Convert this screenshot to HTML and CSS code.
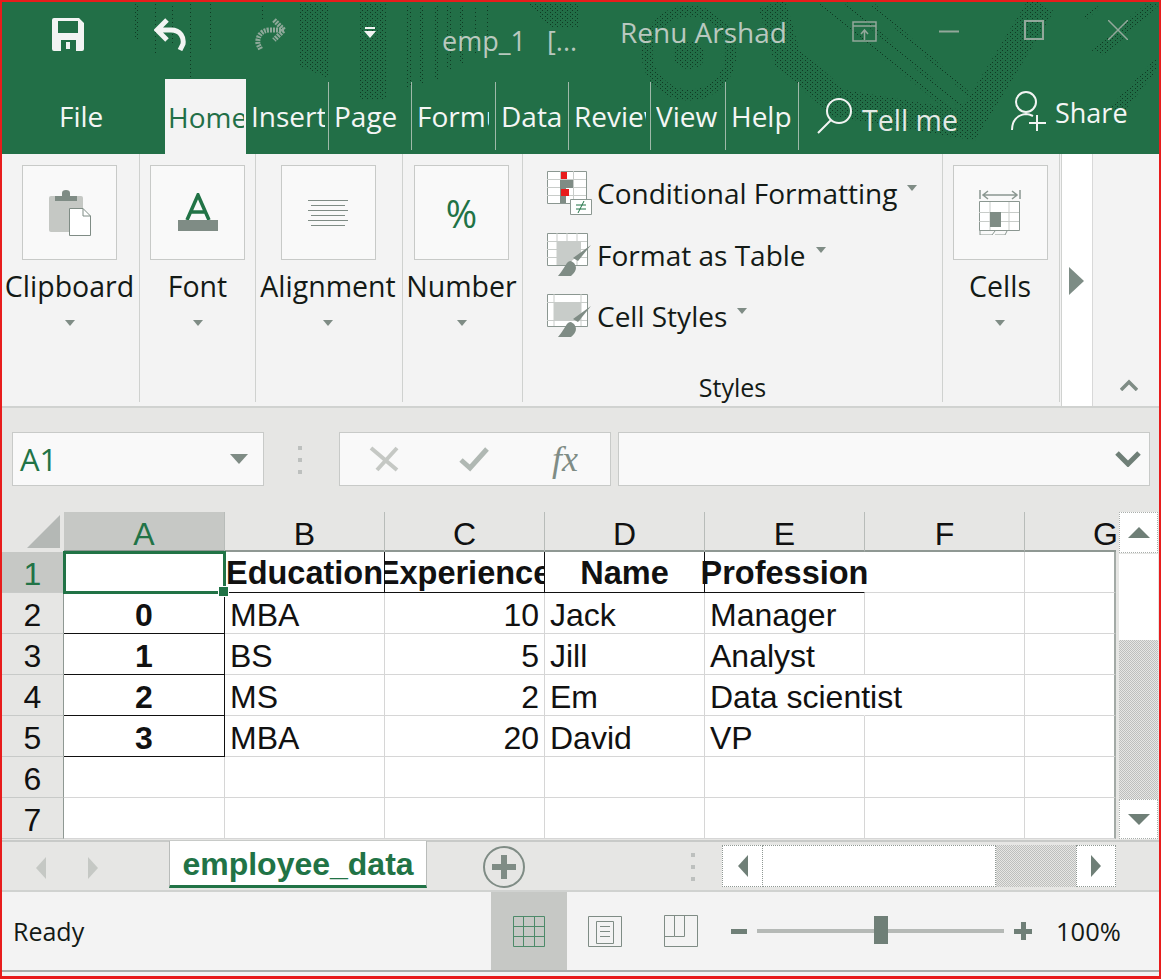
FILE: index.html
```html
<!DOCTYPE html>
<html lang="en">
<head>
<meta charset="utf-8">
<title>emp_1 - Excel</title>
<link rel="stylesheet" href="styles.css">
</head>
<body>
<div class="frame">
  <header class="head">
    <svg class="decor" width="1157" height="150" viewBox="2 2 1157 150" aria-hidden="true">
      <defs>
        <pattern id="dots" width="5" height="4" patternUnits="userSpaceOnUse">
          <rect width="1" height="1" fill="#0f3a23"/>
          <rect x="2" y="2" width="1" height="1" fill="#0f3a23"/>
        </pattern>
      </defs>
      <g fill="none" stroke="url(#dots)" stroke-width="4">
        <path d="M136 4V40M155 4V54M173 4V45M190 4V77M210 4V50M263 4V22M409 5V88M422 5V83M436 5V79M449 5V70M462 5V63M475 5V55M488 5V50"/>
        <path d="M820 4L950 110M846 4L965 110M872 4L975 100M1098 7L1085 18"/>
      </g>
      <g fill="url(#dots)">
        <path d="M298 4H328V78L300 66Z"/>
        <path d="M358 4H386V100H358Z"/>
        <path d="M529 4H580V28L550 28Z"/>
        <path d="M1090 50L1146 4L1160 4L1105 55ZM1109 108L1157 57L1157 70L1125 110Z"/>
      </g>
      <circle cx="689" cy="53" r="42" fill="none" stroke="url(#dots)" stroke-width="11"/>
      <ellipse cx="689" cy="55" rx="16" ry="14" fill="url(#dots)"/>
      <path d="M772 4L787 57L839 103L968 125L1042 4" fill="none" stroke="url(#dots)" stroke-width="28"/>
    </svg>
    <div class="titlebar">
      <svg class="ic ic-save" width="32" height="33" viewBox="0 0 32 33"><path fill="#f2f4f3" fill-rule="evenodd" d="M2 0H27L32 5V31a2 2 0 0 1-2 2H2a2 2 0 0 1-2-2V2a2 2 0 0 1 2-2ZM6 3V15H26V3ZM9 22V33H24V22ZM14 24H18V31H14Z"/></svg>
      <svg class="ic ic-undo" width="32" height="33" viewBox="0 0 32 33"><path fill="none" stroke="#f2f4f3" stroke-width="5" d="M13 2L3 12L13 22M3 12H17C27 12 30 20 29 26L26 32"/></svg>
      <svg class="ic ic-redo" width="32" height="33" viewBox="0 0 32 33"><path fill="none" stroke="#8ea99a" stroke-width="5" stroke-dasharray="2 1" d="M19 2L29 12L19 22M29 12H15C5 12 2 20 3 26L6 32"/></svg>
      <svg class="ic ic-qat" width="12" height="12" viewBox="0 0 12 12"><path fill="#f2f4f3" d="M1 0H11V2H1ZM0 4H12L6 11Z"/></svg>
      <span class="doc">emp_1&nbsp;&nbsp;&nbsp;[...</span>
      <span class="user">Renu Arshad</span>
      <svg class="ic ic-restore" width="25" height="21" viewBox="0 0 25 21"><path fill="none" stroke="#93a89b" stroke-width="1.5" d="M1 1H24V20H1ZM1 5H24M9 13L12.500 9L16 13M12.500 9V19"/></svg>
      <svg class="ic ic-min" width="20" height="3" viewBox="0 0 20 3"><path stroke="#93a89b" stroke-width="2" d="M0 1.500H20"/></svg>
      <svg class="ic ic-max" width="20" height="20" viewBox="0 0 20 20"><path fill="none" stroke="#93a89b" stroke-width="2" d="M1 1H19V19H1Z"/></svg>
      <svg class="ic ic-close" width="20" height="20" viewBox="0 0 20 20"><path fill="none" stroke="#93a89b" stroke-width="1.500" d="M0 0L20 20M20 0L0 20"/></svg>
    </div>
    <nav class="tabs">
      <div class="tab tab-file"><span>File</span></div>
      <div class="tab tab-home"><span>Home</span></div>
      <div class="tab tab-sep t83"><span>Insert</span></div>
      <div class="tab tab-sep t83"><span>Page</span></div>
      <div class="tab tab-sep t84"><span>Formulas</span></div>
      <div class="tab tab-sep t73"><span>Data</span></div>
      <div class="tab tab-sep t82"><span>Review</span></div>
      <div class="tab tab-sep t75"><span>View</span></div>
      <div class="tab tab-sep t73"><span>Help</span></div>
      <svg class="ic ic-search" width="35" height="36" viewBox="0 0 35 36"><path fill="none" stroke="#f2f4f3" stroke-width="2" d="M34 13A12 12 0 1 1 10 13A12 12 0 1 1 34 13ZM14 22L1 35"/></svg>
      <span class="tell">Tell me</span>
      <svg class="ic ic-person" width="36" height="40" viewBox="0 0 36 40"><path fill="none" stroke="#f2f4f3" stroke-width="2" d="M25 11A10 10 0 1 1 5 11A10 10 0 1 1 25 11ZM1 39C1 30 6 24 15 23C18 23 20 24 22 25M26 24V40M18 32H35"/></svg>
      <span class="share">Share</span>
    </nav>
  </header>

  <section class="ribbon">
    <div class="group g-clip">
      <div class="bigbtn"><svg width="42" height="46" viewBox="0 0 42 46"><path fill="#c5c8c4" d="M2 6H32a2 2 0 0 1 2 2V42H2a2 2 0 0 1-2-2V8a2 2 0 0 1 2-2Z"/><path fill="#7f8c85" d="M6 6H28V11H6ZM13 6V3a4 3 0 0 1 8 0V6Z"/><path fill="#fff" stroke="#7f8c85" d="M20.500 18.500H34L41.500 26V45.500H20.500Z"/><path fill="none" stroke="#7f8c85" d="M34 18.500V26H41.500"/></svg></div>
      <div class="glabel">Clipboard</div><i class="caret"></i>
    </div>
    <div class="group g-font">
      <div class="bigbtn"><svg width="40" height="39" viewBox="0 0 40 39"><path fill="none" stroke="#217346" stroke-width="3.500" d="M9 27L20 2L31 27M13 19H27"/><rect y="27" width="40" height="11" fill="#7f8c85"/></svg></div>
      <div class="glabel">Font</div><i class="caret"></i>
    </div>
    <div class="group g-align">
      <div class="bigbtn"><svg width="40" height="28" viewBox="0 0 40 28"><path stroke="#7f8c85" d="M0 1.500H40M3 6.500H37M0 11.500H40M3 16.500H37M0 21.500H40M3 26.500H37"/></svg></div>
      <div class="glabel">Alignment</div><i class="caret"></i>
    </div>
    <div class="group g-num">
      <div class="bigbtn pct">%</div>
      <div class="glabel">Number</div><i class="caret"></i>
    </div>
    <div class="group g-styles">
      <div class="stylerow">
        <svg width="45" height="44" viewBox="0 0 45 44"><path fill="#fff" stroke="#8b9791" d="M.5 .500H39.500V32.500H.5Z"/><path stroke="#c8ccc9" d="M13.500 0V32M26.500 0V32M0 8.500H39M0 16.500H39M0 24.500H39"/><path fill="#7f8c85" d="M13 9H26V17H19V32H13Z"/><path fill="#e81c1c" d="M14 1H20V8H14ZM14 18H22V25H14Z"/><path fill="#fff" stroke="#8b9791" d="M23.500 28.500H44.500V43.500H23.500Z"/><path stroke="#217346" fill="none" d="M29 34H39M29 38H39M37 30L31 42"/></svg>
        <span class="stext">Conditional Formatting</span><i class="caret c-cf"></i>
      </div>
      <div class="stylerow">
        <svg width="45" height="44" viewBox="0 0 45 44"><path fill="#fff" stroke="#8b9791" d="M.5 .500H40.500V32.500H.5Z"/><path stroke="#c8ccc9" d="M10 0V32M20 0V32M30 0V32M0 8.500H40M0 16.500H40M0 24.500H40"/><path fill="#c8ccc9" d="M10 9H34V20L20 32H10Z"/><path fill="#7f8c85" d="M44 12L31 28L26 25ZM24 28C19 28 19 34 11 43H24C30 38 30 34 27 30Z"/></svg>
        <span class="stext">Format as Table</span><i class="caret c-ft"></i>
      </div>
      <div class="stylerow">
        <svg width="45" height="44" viewBox="0 0 45 44"><path fill="#fff" stroke="#8b9791" d="M.5 .500H40.500V32.500H.5Z"/><path stroke="#c8ccc9" d="M7 0V32M34 0V32M0 8.500H40M0 26.500H40"/><rect x="7" y="9" width="27" height="18" fill="#c8ccc9"/><path fill="#7f8c85" d="M44 12L31 28L26 25ZM24 28C19 28 19 34 11 43H24C30 38 30 34 27 30Z"/></svg>
        <span class="stext">Cell Styles</span><i class="caret c-cs"></i>
      </div>
      <div class="styles-label">Styles</div>
    </div>
    <div class="group g-cells">
      <div class="bigbtn"><svg width="42" height="45" viewBox="0 0 42 45"><path fill="none" stroke="#8b9791" stroke-width="1.500" d="M1 0V9M41 0V9M5 5H37M9 1L4 5L9 9M33 1L38 5L33 9"/><path fill="#fff" stroke="#8b9791" d="M.5 11.500H40.500V40.500H.5Z"/><path stroke="#c8ccc9" d="M11 12V40M30 12V40M0 22.500H40M0 31.500H40"/><rect x="11" y="22" width="11" height="15" fill="#7f8c85"/><path fill="none" stroke="#8b9791" d="M1 40V45H13L16 41M16 45H26L28 41"/></svg></div>
      <div class="glabel">Cells</div><i class="caret"></i>
    </div>
    <div class="strip"><i class="arrow-r"></i></div>
    <div class="collapse"><svg width="18" height="12" viewBox="0 0 18 12"><path fill="none" stroke="#7f8c85" stroke-width="3.500" d="M1 11L9 3L17 11"/></svg></div>
  </section>

  <section class="formula">
    <div class="namebox"><span>A1</span><i class="nb-caret"></i></div>
    <div class="grip"><b></b><b></b><b></b></div>
    <div class="fbtns">
      <svg width="30" height="26" viewBox="0 0 30 26"><path fill="none" stroke="#c5c8c4" stroke-width="4" d="M2 2L28 24M28 2L8 24"/></svg>
      <svg width="30" height="26" viewBox="0 0 30 26"><path fill="none" stroke="#b0b8b3" stroke-width="5" d="M2 14L11 22L28 3"/></svg>
      <span class="fx">fx</span>
    </div>
    <div class="finput"><svg width="26" height="16" viewBox="0 0 26 16"><path fill="none" stroke="#6f7f77" stroke-width="5" d="M2 2L13 13L24 2"/></svg></div>
  </section>

  <section class="sheetarea">
    <div class="grid">
      <div class="corner"><svg width="34" height="34" viewBox="0 0 34 34"><path fill="#b4b8b5" d="M33 0V33H0Z"/></svg></div>
      <div class="ch ch-on">A</div><div class="ch">B</div><div class="ch">C</div><div class="ch">D</div><div class="ch">E</div><div class="ch">F</div><div class="ch ch-g">G</div>

      <div class="rh rh-on">1</div>
      <div class="c sel"></div>
      <div class="c hd">Education</div><div class="c hd">Experience</div><div class="c hd">Name</div><div class="c hd hd-last">Profession</div><div class="c"></div><div class="c end"></div>

      <div class="rh">2</div>
      <div class="c ix">0</div><div class="c tx">MBA</div><div class="c num">10</div><div class="c tx">Jack</div><div class="c tx">Manager</div><div class="c"></div><div class="c end"></div>
      <div class="rh">3</div>
      <div class="c ix">1</div><div class="c tx">BS</div><div class="c num">5</div><div class="c tx">Jill</div><div class="c tx">Analyst</div><div class="c"></div><div class="c end"></div>
      <div class="rh">4</div>
      <div class="c ix">2</div><div class="c tx">MS</div><div class="c num">2</div><div class="c tx">Em</div><div class="c tx over">Data scientist</div><div class="c"></div><div class="c end"></div>
      <div class="rh">5</div>
      <div class="c ix">3</div><div class="c tx">MBA</div><div class="c num">20</div><div class="c tx">David</div><div class="c tx">VP</div><div class="c"></div><div class="c end"></div>
      <div class="rh">6</div>
      <div class="c"></div><div class="c"></div><div class="c"></div><div class="c"></div><div class="c"></div><div class="c"></div><div class="c end"></div>
      <div class="rh">7</div>
      <div class="c"></div><div class="c"></div><div class="c"></div><div class="c"></div><div class="c"></div><div class="c"></div><div class="c end"></div>
    </div>
    <div class="vscroll">
      <div class="vbtn"><i class="tri-up"></i></div>
      <div class="vthumb"></div>
      <div class="vtrack"></div>
      <div class="vbtn vbtn-d"><i class="tri-down"></i></div>
    </div>
  </section>

  <section class="sheetbar">
    <i class="nav-l"></i><i class="nav-r"></i>
    <div class="sheettab">employee_data</div>
    <svg class="addsheet" width="42" height="42" viewBox="0 0 42 42"><circle cx="21" cy="21" r="20" fill="none" stroke="#7f8c85" stroke-width="2"/><path stroke="#7f8c85" stroke-width="6" d="M21 9V33M9 21H33"/></svg>
    <div class="grip grip-b"><b></b><b></b><b></b></div>
    <div class="hscroll">
      <div class="hbtn"><i class="tri-left"></i></div>
      <div class="hthumb"></div>
      <div class="htrack"></div>
      <div class="hbtn hbtn-r"><i class="tri-right"></i></div>
    </div>
  </section>

  <footer class="status">
    <span class="ready">Ready</span>
    <div class="view view-on"><svg width="32" height="31" viewBox="0 0 32 31"><path fill="none" stroke="#4d8a69" d="M.5 .500H31.500V30.500H.5ZM10.500 0V31M21.500 0V31M0 10.500H32M0 20.500H32"/></svg></div>
    <div class="view"><svg width="34" height="31" viewBox="0 0 34 31"><path fill="none" stroke="#7f8c85" d="M.5 .500H33.500V30.500H.5ZM8.500 5.500H25.500V27.500H8.500ZM12 10.500H22M12 15.500H22M12 20.500H22"/></svg></div>
    <div class="view"><svg width="34" height="32" viewBox="0 0 34 32"><path fill="none" stroke="#7f8c85" d="M.5 .500H33.500V31.500H.5ZM10.500 0V21.500H20.500V0M0 21.500H10.500"/></svg></div>
    <div class="zoombar">
      <i class="z-minus"></i>
      <div class="z-track"><i class="z-thumb"></i></div>
      <i class="z-plus"></i>
    </div>
    <span class="pct100">100%</span>
  </footer>
</div>
</body>
</html>
```
FILE: styles.css
```css
* { box-sizing: border-box; }
html, body { margin: 0; padding: 0; overflow: hidden; }
body { width: 1161px; height: 979px; font-family: "Open Sans", "Noto Sans", sans-serif; }
i { display: block; font-style: normal; }

.frame {
  width: 1161px; height: 979px;
  border: solid #e81c1c; border-width: 2px 2px 3px;
  display: flex; flex-direction: column;
  background: #f3f3f3;
}

/* head */
.head { position: relative; background: #226f47; height: 152px; flex: none; color: #f4f6f5; }
.decor { position: absolute; left: 0; top: 0; }
.titlebar, .tabs { position: relative; display: flex; }
.titlebar { height: 76px; align-items: flex-start; }
.ic { flex: none; display: block; }
.ic-save { margin: 16px 0 0 50px; }
.ic-undo { margin: 16px 0 0 70px; }
.ic-redo { margin: 16px 0 0 69px; }
.ic-qat { margin: 25px 0 0 77px; }
.doc { margin: 21px 0 0 66px; font-size: 27px; line-height: 36px; color: #b9c8bf; width: 178px; white-space: nowrap; }
.user { margin: 11px 0 0 0; font-size: 28px; line-height: 38px; color: #b9c8bf; width: 232px; white-space: nowrap; }
.ic-restore { margin: 19px 0 0 0; }
.ic-min { margin: 28px 0 0 62px; }
.ic-max { margin: 18px 0 0 65px; }
.ic-close { margin: 18px 0 0 64px; }

.tabs { height: 76px; align-items: flex-start; }
.tab { height: 68px; margin-top: 4px; overflow: hidden; white-space: nowrap; font-size: 28px; line-height: 68px; padding-left: 5px; flex: none; }
.tab span { display: block; overflow: hidden; width: 100%; }
.tab-file { width: 163px; padding-left: 57px; }
.tab-home { width: 81px; height: 75px; margin-top: 1px; background: #f3f3f3; color: #226f47; padding: 0 2px 0 3px; line-height: 76px; }
.tab-sep { border-right: 1px solid #9fb8a9; }
.tab-home + .tab-sep { padding-right: 3px; }
.t83 { width: 83px; }
.t84 { width: 84px; padding-right: 6px; }
.t73 { width: 73px; }
.t82 { width: 82px; padding-right: 4px; }
.t75 { width: 75px; }
.ic-search { margin: 20px 0 0 18px; }
.tell { margin: 22px 0 0 10px; font-size: 28.500px; line-height: 40px; color: #e4e9e6; width: 144px; white-space: nowrap; }
.ic-person { margin: 13px 0 0 5px; }
.share { margin: 15px 0 0 8px; font-size: 27px; line-height: 40px; white-space: nowrap; }

/* ribbon */
.ribbon { display: flex; height: 254px; flex: none; background: #f3f3f3; border-bottom: 2px solid #d0d2d0; color: #131a16; }
.group { display: flex; flex-direction: column; align-items: center; padding-top: 11px; height: 248px; border-right: 1px solid #cfd1cf; flex: none; position: relative; }
.g-clip { width: 138px; padding-right: 2px; }
.g-font { width: 116px; }
.g-align { width: 147px; padding-right: 2px; }
.g-num { width: 120px; padding-right: 2px; }
.g-styles { width: 420px; align-items: flex-start; padding: 8px 0 0 24px; }
.g-cells { width: 117px; padding-right: 2px; }
.bigbtn { width: 95px; height: 95px; border: 1px solid #c8cac8; background: #f9f9f9; display: flex; align-items: center; justify-content: center; flex: none; }
.pct { color: #217346; font-size: 38px; line-height: 1; }
.glabel { font-size: 28.500px; line-height: 40px; margin-top: 6px; white-space: nowrap; }
.caret { width: 0; height: 0; border: 5px solid transparent; border-top: 6px solid #7f8c85; border-bottom: 0; margin-top: 14px; }
.stylerow { display: flex; align-items: center; height: 62px; white-space: nowrap; }
.stylerow svg { flex: none; margin-right: 5px; }
.stext { font-size: 28px; line-height: 40px; }
.c-cf, .c-ft, .c-cs { margin: 0 0 10px 10px; }
.styles-label { font-size: 25px; line-height: 30px; align-self: center; margin: 25px 0 0 -24px; }
.strip { width: 32px; height: 252px; background: #fff; margin-left: 1px; border-left: 1px solid #d0d2d0; border-right: 1px solid #d8d8d8; display: flex; align-items: flex-start; padding: 113px 0 0 7px; flex: none; }
.arrow-r { width: 0; height: 0; border: solid transparent; border-width: 14px 0 14px 15px; border-left-color: #7d8c85; }
.collapse { flex: 1; display: flex; justify-content: center; padding: 225px 0 0 5px; }

/* formula */
.formula { display: flex; height: 104px; flex: none; align-items: flex-start; background: #e6e6e4; padding-top: 24px; }
.namebox { width: 252px; height: 54px; margin-left: 10px; background: #f9f9f9; border: 1px solid #c8cac8; display: flex; align-items: center; justify-content: space-between; padding: 0 15px 0 7px; color: #217346; font-size: 31px; }
.nb-caret { width: 0; height: 0; border: solid transparent; border-width: 10px 9px 0; border-top-color: #7f8c85; }
.grip { width: 4px; display: flex; flex-direction: column; gap: 8px; margin: 14px 37px 0 34px; flex: none; }
.grip b { display: block; width: 4px; height: 4px; background: #bdc0be; }
.fbtns { width: 272px; height: 54px; background: #f9f9f9; border: 1px solid #c8cac8; display: flex; align-items: center; padding-left: 29px; gap: 60px; flex: none; }
.fx { font-family: "Liberation Serif", serif; font-style: italic; font-size: 36px; color: #7f8c85; line-height: 1; margin-left: 3px; }
.finput { width: 532px; height: 54px; margin-left: 7px; background: #f9f9f9; border: 1px solid #c8cac8; display: flex; align-items: center; justify-content: flex-end; padding-right: 8px; flex: none; }

/* sheet */
.sheetarea { display: flex; height: 328px; flex: none; background: #e6e6e4; align-items: flex-start; }
.grid { display: grid; grid-template-columns: 62px 161px 160px 160px 160px 160px 160px 91px; grid-template-rows: 40px repeat(7, 41px); width: 1114px; background: #fff; font-family: "Liberation Sans", Arial, sans-serif; font-size: 32px; color: #111; flex: none; }
.corner { background: #e6e6e4; display: flex; align-items: flex-end; justify-content: flex-end; padding: 0 3px 3px 0; }
.ch { background: #e6e6e4; border-right: 1px solid #b8bcb9; border-bottom: 2px solid #8f9893; display: flex; align-items: center; justify-content: center; line-height: 1; padding-top: 6px; }
.ch-on { background: #c6c8c5; color: #217346; }
.ch-g { justify-content: flex-start; padding-left: 68px; border-right: 0; }
.rh { background: #e6e6e4; border-right: 1px solid #8f9893; border-bottom: 1px solid #c8cac8; display: flex; align-items: center; justify-content: center; line-height: 1; padding-top: 4px; }
.rh-on { background: #c6c8c5; color: #217346; }
.c { border-right: 1px solid #d6d6d6; border-bottom: 1px solid #d6d6d6; display: flex; align-items: center; white-space: nowrap; overflow: hidden; min-width: 0; line-height: 1; padding-top: 4px; }
.end { border-right: 2px solid #a3aaa6; }
.sel { position: relative; overflow: visible; outline: 3px solid #217346; outline-offset: -2px; z-index: 1; }
.sel::after { content: ""; position: absolute; right: -5px; bottom: -5px; width: 9px; height: 9px; background: #217346; border: 1px solid #fff; }
.hd { font-weight: 700; font-size: 32.500px; justify-content: center; border-right-color: #111; border-bottom-color: #111; padding-top: 3px; }
.hd-last { overflow: visible; border-right-color: #fff; }
.ix { font-weight: 700; justify-content: center; border-right-color: #111; border-bottom-color: #111; }
.tx { padding-left: 5px; }
.over { overflow: visible; border-right-color: #fff; }
.num { justify-content: flex-end; padding-right: 5px; }
.vscroll { width: 39px; margin-left: 3px; height: 327px; display: flex; flex-direction: column; flex: none; }
.vbtn { height: 41px; background: #fff; border: 1px dotted #a9aeab; display: flex; align-items: center; justify-content: center; flex: none; }
.vbtn-d { height: 40px; }
.vthumb { height: 86px; background: #fff; flex: none; margin-top: 1px; }
.vtrack { flex: 1; background: repeating-conic-gradient(#bdbfbd 0 25%, #e6e6e4 0 50%) 0 0 / 2px 2px; }
.tri-up, .tri-down { width: 0; height: 0; border: solid transparent; border-width: 0 11px 11px; border-bottom-color: #6f7f77; }
.tri-down { border-width: 11px 11px 0; border-top-color: #6f7f77; }

/* sheet bar */
.sheetbar { display: flex; height: 52px; flex: none; align-items: flex-start; background: #e6e6e4; border-top: 2px solid #c8cac8; border-bottom: 2px solid #d0d2d0; }
.nav-l, .nav-r { width: 0; height: 0; border: solid transparent; margin-top: 15px; }
.nav-l { border-width: 11px 10px 11px 0; border-right-color: #c5c8c4; margin-left: 34px; }
.nav-r { border-width: 11px 0 11px 10px; border-left-color: #c5c8c4; margin-left: 42px; }
.sheettab { width: 258px; height: 47px; margin: -1px 0 0 71px; background: #fff; border: solid #b9bcba; border-width: 0 1px; border-bottom: 3px solid #217346; color: #217346; font-family: "Liberation Sans", Arial, sans-serif; font-weight: 700; font-size: 32px; line-height: 46px; text-align: center; flex: none; }
.addsheet { flex: none; margin: 4px 0 0 56px; }
.grip-b { margin: 11px 0 0 166px; }
.hscroll { display: flex; margin: 3px 0 0 27px; height: 42px; flex: none; }
.hbtn { width: 41px; background: #fff; border: 1px dotted #8f9893; display: flex; align-items: center; justify-content: center; }
.hbtn-r { width: 40px; }
.hthumb { width: 233px; background: #fff; border: 1px dotted #8f9893; border-left: 0; }
.htrack { width: 80px; background: repeating-conic-gradient(#bdbfbd 0 25%, #e6e6e4 0 50%) 0 0 / 2px 2px; }
.tri-left, .tri-right { width: 0; height: 0; border: solid transparent; border-width: 11px 10px 11px 0; border-right-color: #6f7f77; }
.tri-right { border-width: 11px 0 11px 10px; border-left-color: #6f7f77; }

/* status */
.status { display: flex; flex: 1; align-items: center; background: #f3f3f3; border-bottom: 2px solid #a9aeab; box-shadow: 0 2px 0 #f3f3f3; margin-bottom: 4px; color: #131a16; }
.ready { font-size: 25px; margin-left: 11px; width: 478px; }
.view { width: 76px; height: 100%; display: flex; align-items: center; justify-content: center; flex: none; }
.view-on { background: #c6c8c5; }
.zoombar { display: flex; align-items: center; margin-left: 12px; }
.z-minus { width: 16px; height: 5px; background: #6f7f77; }
.z-track { width: 247px; height: 4px; margin: 0 10px; background: #b5b9b6; position: relative; }
.z-thumb { position: absolute; left: 117px; top: -13px; width: 14px; height: 28px; background: #6f7f77; }
.z-plus { width: 18px; height: 18px; background: linear-gradient(#6f7f77, #6f7f77) center / 100% 5px no-repeat, linear-gradient(#6f7f77, #6f7f77) center / 5px 100% no-repeat; }
.pct100 { font-size: 25.500px; margin-left: 24px; }
```
